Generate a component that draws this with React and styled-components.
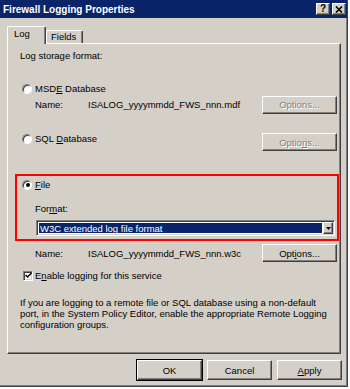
import React from "react";
import styled, { createGlobalStyle, css } from "styled-components";

const Global = createGlobalStyle`
  body {
    margin: 0;
    background: #ffffff;
    font-family: "Liberation Sans", Arial, sans-serif;
    font-size: 9.5px;
    color: #000;
  }
`;

const raised = css`
  border: 1px solid;
  border-color: #ffffff #404040 #404040 #ffffff;
  box-shadow: inset -1px -1px 0 #808080;
`;

const sunken = css`
  border: 1px solid;
  border-color: #808080 #ffffff #ffffff #808080;
  box-shadow: inset 1px 1px 0 #404040, inset -1px -1px 0 #d4d0c8;
`;

const Window = styled.div`
  width: 348px;
  height: 387px;
  box-sizing: border-box;
  background: #d4d0c8;
  border-right: 1px solid #404040;
  border-bottom: 1px solid #404040;
  box-shadow: inset -1px -1px 0 #808080;
  display: flex;
  flex-direction: column;
`;

const TitleBar = styled.div`
  height: 18px;
  background: #0a246a;
  color: #fff;
  display: flex;
  align-items: center;
  padding: 0 1px 0 3px;
  font-weight: bold;
  font-size: 10px;
  .title {
    flex: 1;
  }
`;

const CaptionButton = styled.div`
  width: 14px;
  height: 12px;
  box-sizing: border-box;
  background: #d4d0c8;
  ${raised};
  margin-left: 2px;
  color: #000;
  font-size: 10px;
  line-height: 10px;
  display: flex;
  align-items: center;
  justify-content: center;
`;

const Body = styled.div`
  padding: 0 5px 0 7px;
  display: flex;
  flex-direction: column;
`;

const TabStrip = styled.div`
  margin-top: 8px;
  height: 17px;
  display: flex;
  align-items: flex-end;
`;

const Tab = styled.div`
  box-sizing: border-box;
  background: #d4d0c8;
  border-top: 1px solid #fff;
  border-left: 1px solid #fff;
  border-right: 1px solid #404040;
  box-shadow: inset -1px 0 0 #808080;
  border-radius: 2px 2px 0 0;
  padding-left: ${p => (p.$active ? 6 : 4)}px;
  line-height: ${p => (p.$active ? 14 : 11)}px;
  width: ${p => p.$width}px;
  height: ${p => (p.$active ? 18 : 13)}px;
  position: relative;
  z-index: 1;
  margin-bottom: ${p => (p.$active ? -1 : 0)}px;
`;

const Panel = styled.div`
  width: 334px;
  height: 311px;
  box-sizing: border-box;
  border: 1px solid;
  border-color: #fff #404040 #404040 #fff;
  box-shadow: inset -1px -1px 0 #808080;
  padding: 5px 3px 0 12px;
  display: flex;
  flex-direction: column;
`;

const Line = styled.div`
  line-height: 13px;
  height: 13px;
`;

const OptionRow = styled.div`
  display: flex;
  align-items: ${p => (p.$start ? "flex-start" : "center")};
  margin-top: ${p => p.$top || 0}px;
  margin-left: ${p => p.$indent || 0}px;
  line-height: 13px;
  min-height: 13px;
`;

const Radio = styled.span`
  width: 10px;
  height: 10px;
  flex: none;
  box-sizing: border-box;
  border-radius: 50%;
  background: #fff;
  border: 1px solid;
  border-color: #808080 #fff #fff #808080;
  box-shadow: inset 1px 1px 0 #404040;
  margin: ${p => p.$top || 0}px 3px 0 ${p => (p.$flush ? 0 : 2)}px;
  display: flex;
  align-items: center;
  justify-content: center;
  &::after {
    content: "";
    width: 4px;
    height: 4px;
    border-radius: 50%;
    background: ${p => (p.$checked ? "#000" : "transparent")};
    margin: 1px 0 0 1px;
  }
`;

const Check = styled.span`
  width: 10px;
  height: 10px;
  box-sizing: border-box;
  background: #fff;
  ${sunken};
  margin: 0 2px 0 3px;
  display: flex;
  align-items: center;
  justify-content: center;
`;

const NameRow = styled.div`
  display: flex;
  align-items: center;
  margin-top: ${p => p.$top || 0}px;
  height: ${p => p.$height || 17}px;
  .label {
    padding-left: 15px;
    width: 53px;
  }
  .value {
    flex: 1;
  }
`;

const Button = styled.div`
  box-sizing: border-box;
  width: ${p => p.$width || 75}px;
  height: ${p => p.$height || 18}px;
  background: #d4d0c8;
  ${raised};
  margin-left: ${p => (p.$inline ? "0" : "auto")};
  margin-top: ${p => p.$top || 0}px;
  display: flex;
  align-items: center;
  justify-content: center;
  color: ${p => (p.$disabled ? "#808080" : "#000")};
  text-shadow: ${p => (p.$disabled ? "1px 1px 0 #fff" : "none")};
  ${p =>
    p.$default &&
    css`
      outline: 1px solid #000;
    `}
`;

const RedBox = styled.div`
  margin: 23px -2px 0 -5px;
  border: 2px solid #ff0000;
  padding: 2px 2px 3px 5px;
  display: flex;
  flex-direction: column;
`;

const Combo = styled.div`
  margin: 5px 0 0 14px;
  height: 16px;
  box-sizing: border-box;
  background: #fff;
  ${sunken};
  display: flex;
  padding: 2px;
  .text {
    flex: 1;
    background: #0a246a;
    color: #fff;
    line-height: 12px;
    padding-left: 1px;
  }
`;

const DropButton = styled.div`
  width: 10px;
  box-sizing: border-box;
  background: #d4d0c8;
  ${raised};
  margin: -1px -1px -1px 1px;
  display: flex;
  align-items: center;
  justify-content: center;
`;

const Paragraph = styled.p`
  margin: 15px 0 0 0;
  line-height: 11px;
  width: 310px;
`;

const Footer = styled.div`
  margin-top: 6px;
  display: flex;
  justify-content: flex-end;
  gap: 5px;
`;

const U = styled.span`
  text-decoration: underline;
`;

const App = () => (
  <Window>
    <Global />
    <TitleBar>
      <span className="title">Firewall Logging Properties</span>
      <CaptionButton>
        <b>?</b>
      </CaptionButton>
      <CaptionButton>
        <svg width="8" height="7" viewBox="0 0 8 7">
          <path d="M1 0.5 L7 6.5 M7 0.5 L1 6.5" stroke="#000" strokeWidth="1.6" />
        </svg>
      </CaptionButton>
    </TitleBar>
    <Body>
      <TabStrip>
        <Tab $active $width={39}>Log</Tab>
        <Tab $width={37}>Fields</Tab>
      </TabStrip>
      <Panel>
        <Line>Log storage format:</Line>

        <OptionRow $top={20}>
          <Radio />
          <span>
            MSD<U>E</U> Database
          </span>
        </OptionRow>
        <NameRow $top={1}>
          <span className="label">Name:</span>
          <span className="value">ISALOG_yyyymmdd_FWS_nnn.mdf</span>
          <Button $disabled>Options...</Button>
        </NameRow>

        <OptionRow $top={19} $start>
          <Radio $top={2} />
          <span>
            SQL <U>D</U>atabase
          </span>
          <Button $disabled $top={1}>
            Optio<U>n</U>s...
          </Button>
        </OptionRow>

        <RedBox>
          <OptionRow>
            <Radio $checked $flush />
            <span>
              <U>F</U>ile
            </span>
          </OptionRow>
          <OptionRow $top={11} $indent={13}>
            <span>
              For<U>m</U>at:
            </span>
          </OptionRow>
          <Combo>
            <span className="text">W3C extended log file format</span>
            <DropButton>
              <svg width="5" height="3" viewBox="0 0 5 3">
                <path d="M0 0 H5 L2.5 3 Z" fill="#000" />
              </svg>
            </DropButton>
          </Combo>
        </RedBox>

        <NameRow $top={3} $height={18}>
          <span className="label">Name:</span>
          <span className="value">ISALOG_yyyymmdd_FWS_nnn.w3c</span>
          <Button>
            Opt<U>i</U>ons...
          </Button>
        </NameRow>

        <OptionRow $top={7}>
          <Check>
            <svg width="7" height="7" viewBox="0 0 7 7">
              <path d="M0.5 3 L2.5 5 L6.5 1" stroke="#000" strokeWidth="1.5" fill="none" />
            </svg>
          </Check>
          <span>
            E<U>n</U>able logging for this service
          </span>
        </OptionRow>

        <Paragraph>
          If you are logging to a remote file or SQL database using a non-default
          port, in the System Policy Editor, enable the appropriate Remote Logging
          configuration groups.
        </Paragraph>
      </Panel>
      <Footer>
        <Button $inline $width={65} $height={20} $default>
          OK
        </Button>
        <Button $inline $width={65} $height={20}>
          Cancel
        </Button>
        <Button $inline $width={65} $height={20}>
          <span>
            <U>A</U>pply
          </span>
        </Button>
      </Footer>
    </Body>
  </Window>
);

export default App;
